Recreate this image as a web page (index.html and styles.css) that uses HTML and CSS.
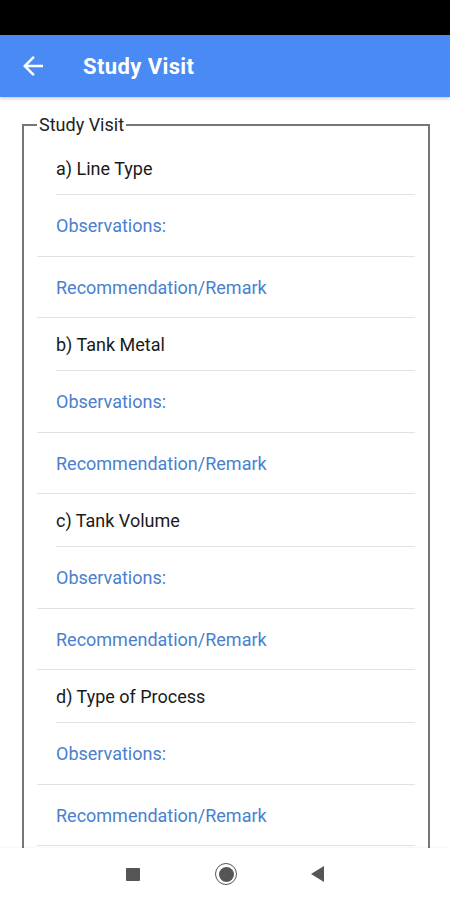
FILE: index.html
```html
<!DOCTYPE html>
<html lang="en">
<head>
    <meta charset="UTF-8">
    <meta name="viewport" content="width=device-width, initial-scale=1.0">
    <title>Study Visit</title>
    <link rel="stylesheet" href="styles.css">
</head>
<body>
    <div class="status-bar"></div>

    <div class="app-bar">
        <svg class="back" width="30" height="30" viewBox="0 0 24 24">
            <path d="M20 11H7.83l5.59-5.59L12 4l-8 8 8 8 1.41-1.41L7.83 13H20v-2z" fill="#fff"/>
        </svg>
        <h1>Study Visit</h1>
    </div>

    <div class="content">
        <fieldset class="visit">
            <legend>Study Visit</legend>

            <div class="item-title">a) Line Type</div>
            <div class="item-field">Observations:</div>
            <div class="item-field remark">Recommendation/Remark</div>

            <div class="item-title">b) Tank Metal</div>
            <div class="item-field">Observations:</div>
            <div class="item-field remark">Recommendation/Remark</div>

            <div class="item-title">c) Tank Volume</div>
            <div class="item-field">Observations:</div>
            <div class="item-field remark">Recommendation/Remark</div>

            <div class="item-title">d) Type of Process</div>
            <div class="item-field">Observations:</div>
            <div class="item-field remark">Recommendation/Remark</div>
        </fieldset>
    </div>

    <div class="nav-bar">
        <span class="nav-square"></span>
        <span class="nav-home"><span></span></span>
        <span class="nav-back"></span>
    </div>
</body>
</html>
```

FILE: styles.css
```css
body {
    margin: 0;
    padding: 0;
    width: 450px;
    height: 900px;
    overflow: hidden;
    background-color: #fff;
    font-family: Roboto, "Noto Sans", Arial, sans-serif;
    display: flex;
    flex-direction: column;
}

.status-bar {
    height: 35px;
    background-color: #000;
    flex-shrink: 0;
}

.app-bar {
    height: 62px;
    flex-shrink: 0;
    background-color: #4a8af4;
    display: flex;
    align-items: center;
    padding-left: 18px;
    box-shadow: 0 2px 3px rgba(0, 0, 0, 0.18);
    position: relative;
    z-index: 2;
}

.app-bar .back {
    width: 30px;
    height: 30px;
}

.app-bar h1 {
    margin: 0 0 0 35px;
    color: #fff;
    font-size: 22px;
    font-weight: 700;
    letter-spacing: 0.4px;
}

.content {
    flex: 1;
    overflow: hidden;
    padding-top: 18px;
}

.visit {
    margin: 0 20px 0 22px;
    padding: 7px 13px 60px 13px;
    border: 2px solid #777;
    border-bottom: none;
}

.visit legend {
    padding: 0 2px;
    font-size: 18px;
    line-height: 20px;
    color: #222;
}

.item-title {
    margin-left: 19px;
    padding: 17px 0 15px;
    font-size: 18px;
    line-height: 20px;
    color: #1a1a1a;
    border-bottom: 1px solid #e2e2e2;
}

.item-field {
    padding: 21px 0 20px 19px;
    font-size: 18px;
    line-height: 20px;
    color: #4a7fd0;
    border-bottom: 1px solid #e2e2e2;
}

.item-field.remark {
    padding-bottom: 19px;
}

.nav-bar {
    height: 52px;
    flex-shrink: 0;
    background-color: #fff;
    display: flex;
    align-items: center;
    justify-content: center;
    position: relative;
    z-index: 2;
    box-shadow: 0 -1px 2px rgba(0, 0, 0, 0.04);
}

.nav-square {
    width: 14px;
    height: 13px;
    background-color: #555;
    border-radius: 1px;
    margin-right: 75px;
}

.nav-home {
    width: 20px;
    height: 20px;
    border-radius: 50%;
    border: 1.5px solid #555;
    display: flex;
    align-items: center;
    justify-content: center;
    margin-right: 74px;
}

.nav-home span {
    width: 15px;
    height: 15px;
    border-radius: 50%;
    background-color: #555;
}

.nav-back {
    width: 0;
    height: 0;
    border-top: 8px solid transparent;
    border-bottom: 8px solid transparent;
    border-right: 13px solid #555;
}
```
